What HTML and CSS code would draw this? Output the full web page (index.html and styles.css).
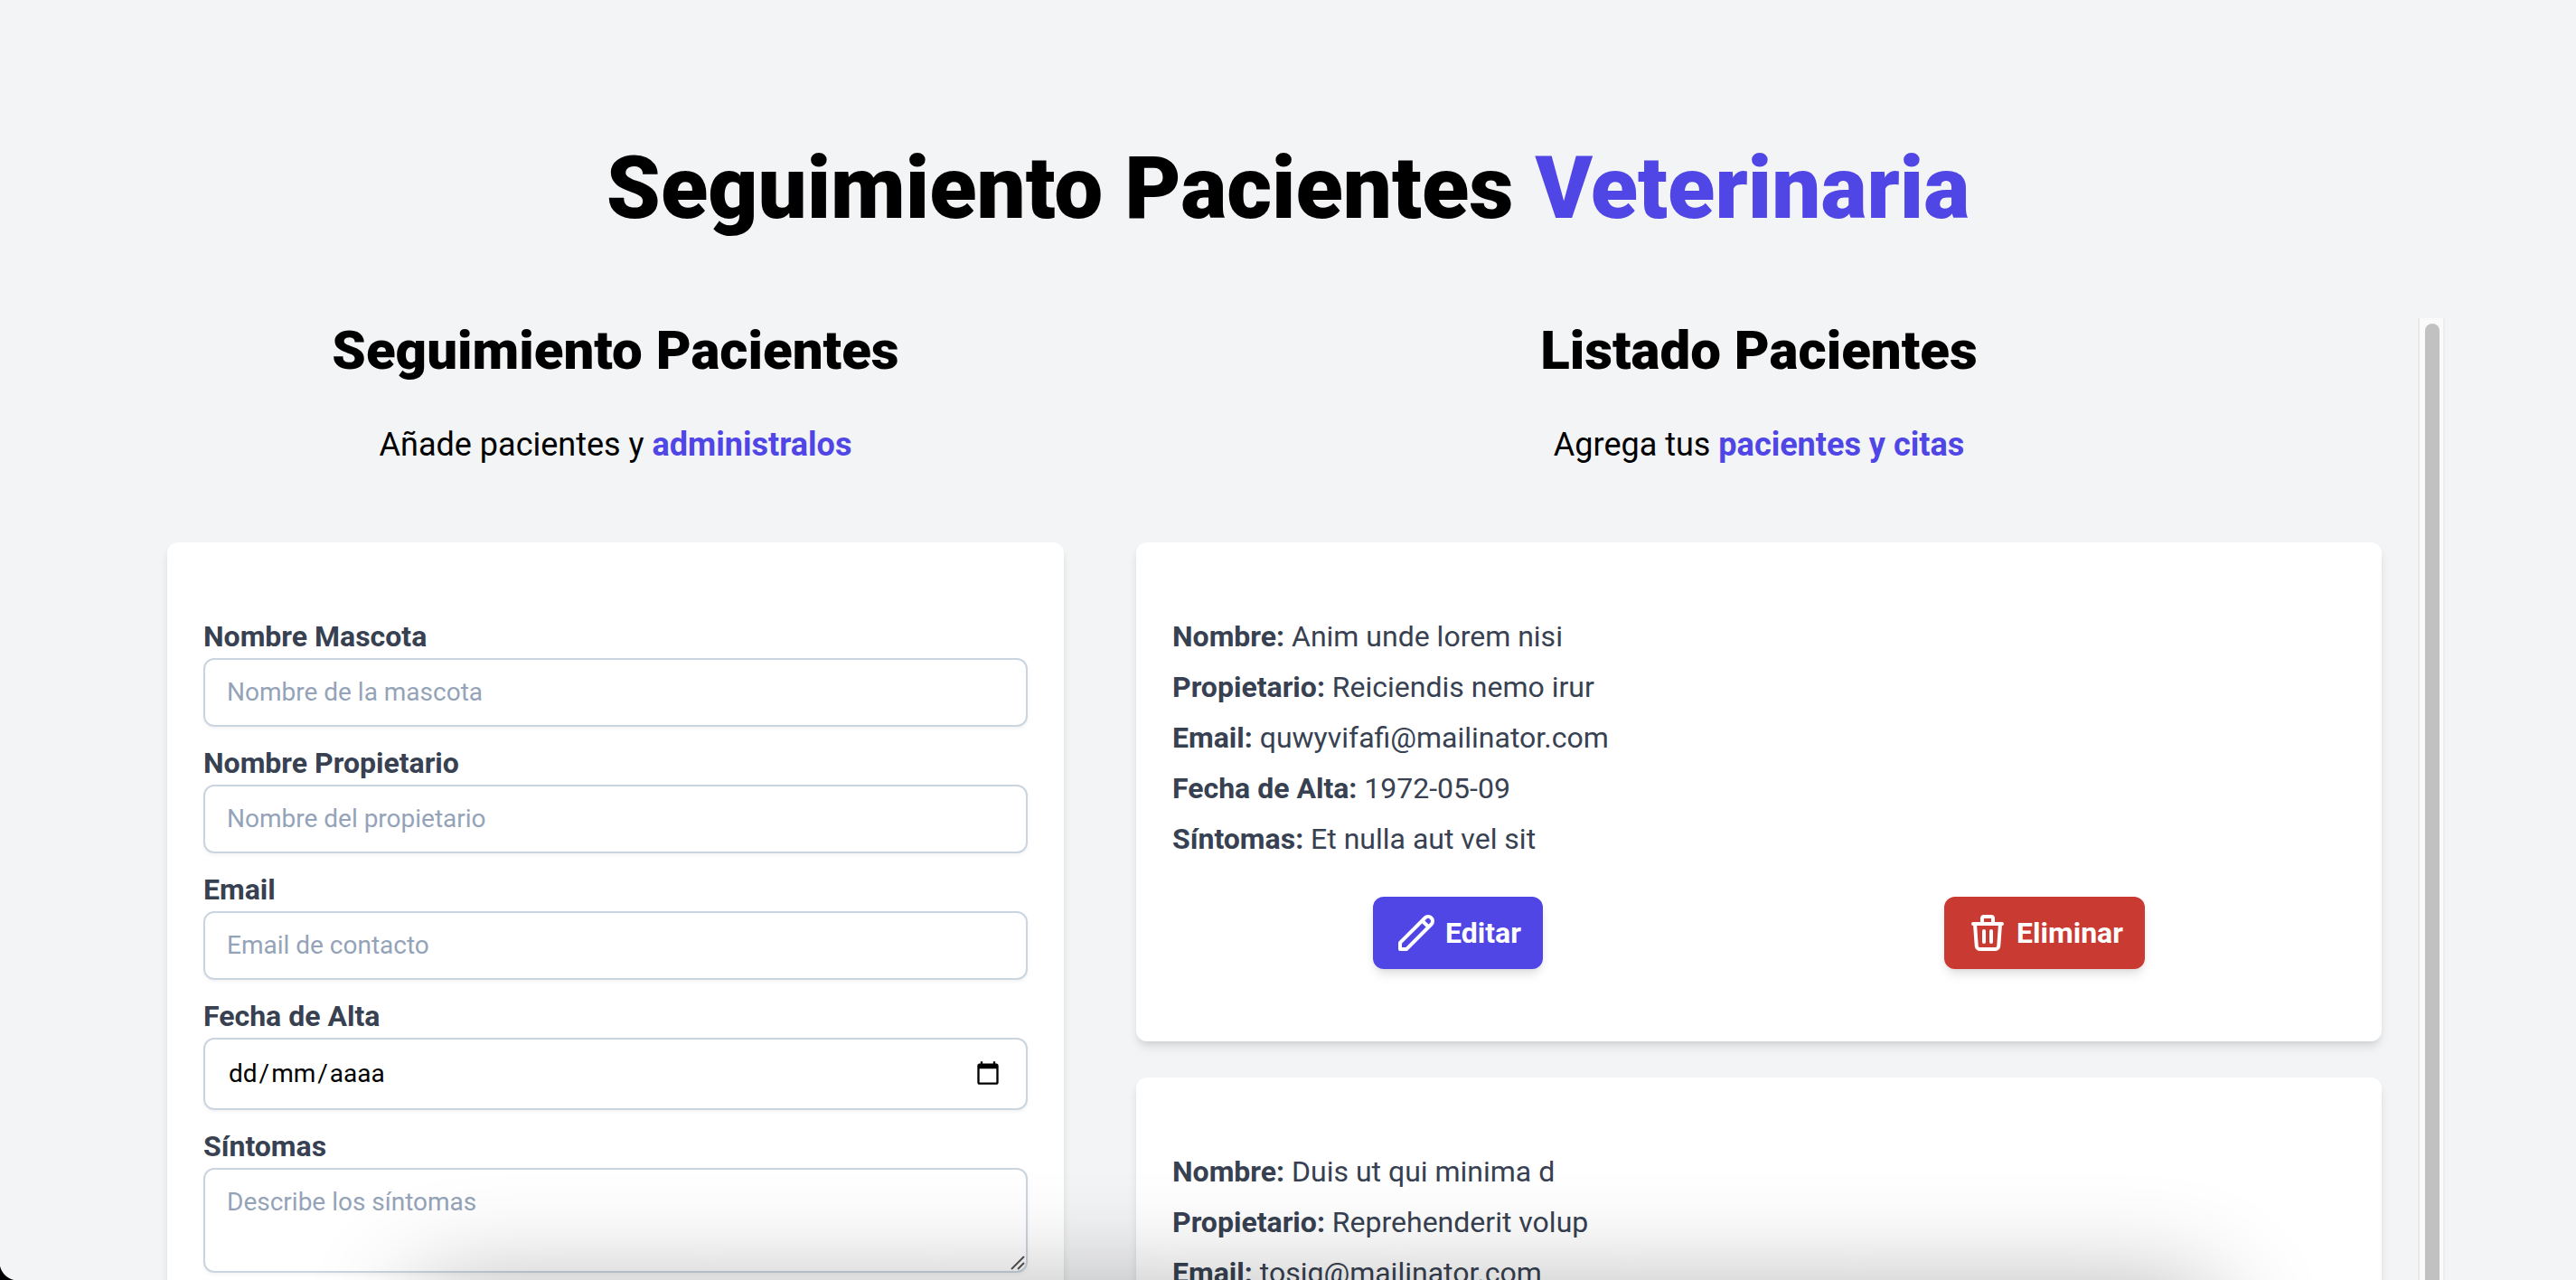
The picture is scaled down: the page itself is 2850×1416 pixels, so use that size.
FILE: index.html
```html
<!DOCTYPE html>
<html lang="es">
<head>
<meta charset="utf-8">
<meta name="viewport" content="width=device-width, initial-scale=1">
<title>Seguimiento Pacientes Veterinaria</title>
<link rel="stylesheet" href="styles.css">
</head>
<body>
<svg class="sprite" aria-hidden="true">
  <symbol id="icon-pencil" viewBox="0 0 24 24"><path d="M15.232 5.232l3.536 3.536m-2.036-5.036a2.5 2.5 0 113.536 3.536L6.5 21.036H3v-3.572L16.732 3.732z"/></symbol>
  <symbol id="icon-trash" viewBox="0 0 24 24"><path d="M19 7l-.867 12.142A2 2 0 0116.138 21H7.862a2 2 0 01-1.995-1.858L5 7m5 4v6m4-6v6m1-10V4a1 1 0 00-1-1h-4a1 1 0 00-1 1v3M4 7h16"/></symbol>
</svg>
<div class="container">
  <h1 class="title">Seguimiento Pacientes <span class="accent">Veterinaria</span></h1>
  <main class="columns">
    <section class="form-column">
      <h2 class="heading">Seguimiento Pacientes</h2>
      <p class="lead">Añade pacientes y <span class="accent strong">administralos</span></p>
      <form class="card form">
        <div class="field">
          <label class="label" for="mascota">Nombre Mascota</label>
          <input class="control" id="mascota" type="text" placeholder="Nombre de la mascota">
        </div>
        <div class="field">
          <label class="label" for="propietario">Nombre Propietario</label>
          <input class="control" id="propietario" type="text" placeholder="Nombre del propietario">
        </div>
        <div class="field">
          <label class="label" for="email">Email</label>
          <input class="control" id="email" type="email" placeholder="Email de contacto">
        </div>
        <div class="field">
          <label class="label" for="alta">Fecha de Alta</label>
          <div class="control-wrap">
            <input class="control date" id="alta" type="date">
            <span class="date-format" aria-hidden="true"><span class="date-part">dd</span>/<span class="date-part">mm</span>/<span class="date-part">aaaa</span></span>
            <svg class="calendar" viewBox="0 0 24 24" aria-hidden="true"><path d="M20 3h-1V1h-2v2H7V1H5v2H4c-1.100 0-2 .9-2 2v16c0 1.100.9 2 2 2h16c1.100 0 2-.9 2-2V5c0-1.100-.9-2-2-2zm0 18H4V8h16v13z"/></svg>
          </div>
        </div>
        <div class="field">
          <label class="label" for="sintomas">Síntomas</label>
          <div class="control-wrap">
            <textarea class="control area" id="sintomas" rows="2" placeholder="Describe los síntomas"></textarea>
            <svg class="grip" viewBox="0 0 16 16" aria-hidden="true"><path d="M1 15L15 1M8 15l7-7"/></svg>
          </div>
        </div>
      </form>
    </section>
    <section class="list-column">
      <div class="list-scroll" tabindex="0">
        <h2 class="heading">Listado Pacientes</h2>
        <p class="lead">Agrega tus <span class="accent strong">pacientes y citas</span></p>
        <article class="card patient">
          <p class="row"><b>Nombre:</b> Anim unde lorem nisi</p>
          <p class="row"><b>Propietario:</b> Reiciendis nemo irur</p>
          <p class="row"><b>Email:</b> quwyvifafi@mailinator.com</p>
          <p class="row"><b>Fecha de Alta:</b> 1972-05-09</p>
          <p class="row"><b>Síntomas:</b> Et nulla aut vel sit</p>
          <div class="actions">
            <button class="button edit" type="button"><svg class="icon" aria-hidden="true"><use href="#icon-pencil"/></svg>Editar</button>
            <button class="button delete" type="button"><svg class="icon" aria-hidden="true"><use href="#icon-trash"/></svg>Eliminar</button>
          </div>
        </article>
        <article class="card patient">
          <p class="row"><b>Nombre:</b> Duis ut qui minima d</p>
          <p class="row"><b>Propietario:</b> Reprehenderit volup</p>
          <p class="row"><b>Email:</b> tosig@mailinator.com</p>
        </article>
      </div>
      <div class="track" aria-hidden="true"><div class="thumb"></div></div>
    </section>
  </main>
</div>
<div class="bottom-shade" aria-hidden="true"></div>
<div class="corner" aria-hidden="true"></div>
</body>
</html>
```

FILE: styles.css
```css
*, *::before, *::after { box-sizing: border-box; margin: 0; padding: 0; }

body {
  height: 100vh;
  overflow: hidden;
  background: #f3f4f6;
  color: #000;
  font: 32px/48px Roboto, sans-serif;
}

.sprite { position: absolute; width: 0; height: 0; }

.container { max-width: 2560px; margin: 0 auto; padding-top: 160px; }

.title { font-size: 96px; line-height: 96px; font-weight: 900; text-align: center; }
.accent { color: #4f46e5; }
.strong { font-weight: 700; }

.columns { display: flex; margin-top: 96px; }
.form-column { width: 40%; margin: 0 40px; }
.list-column { display: flex; width: 60%; height: 100vh; }
.list-scroll { flex: 1; overflow-y: auto; scrollbar-width: none; }

.track {
  flex: none;
  width: 30px;
  padding: 6px 4px 6px 6px;
  background: #fafafa;
  border-left: 2px solid #e8e8e8;
  border-right: 2px solid #ededed;
}
.thumb { width: 16px; height: 90%; border-radius: 8px; background: #c1c1c1; }

.heading { font-size: 60px; line-height: 72px; font-weight: 900; text-align: center; }
.lead { margin: 40px 0 80px; font-size: 36px; line-height: 56px; text-align: center; }

.card {
  padding: 80px 40px;
  background: #fff;
  border-radius: 12px;
  box-shadow: 0 8px 12px -2px rgba(0, 0, 0, .1), 0 4px 8px -4px rgba(0, 0, 0, .1);
  color: #374151;
}

.field { margin-bottom: 16px; }
.label { display: block; font-weight: 700; }

.control {
  display: block;
  width: 100%;
  padding: 16px 24px;
  border: 2px solid #cbd5e1;
  border-radius: 12px;
  background: #fff;
  box-shadow: 0 2px 4px rgba(0, 0, 0, .05);
  color: #000;
  font: 28px/40px Roboto, sans-serif;
}
.control::placeholder { color: #94a3b8; opacity: 1; }
.control-wrap { position: relative; }
.date { height: 80px; }
.date::-webkit-datetime-edit,
.date::-webkit-calendar-picker-indicator { opacity: 0; }
.date-format {
  position: absolute;
  left: 26px;
  top: 20px;
  color: #000;
  font-size: 28px;
  line-height: 40px;
  pointer-events: none;
}
.date-part { padding: 0 2px; }
.calendar { position: absolute; right: 30px; top: 25px; width: 28px; height: 28px; pointer-events: none; }
.area { resize: vertical; }
.area::-webkit-resizer { background: transparent; }
.grip {
  position: absolute;
  right: 3px;
  bottom: 3px;
  width: 16px;
  height: 16px;
  fill: none;
  stroke: #555;
  stroke-width: 2;
  pointer-events: none;
}

.patient { margin: 0 40px 40px; }
.row { margin-bottom: 8px; }
.actions { display: flex; justify-content: space-around; padding-top: 32px; }

.button {
  display: flex;
  align-items: center;
  gap: 8px;
  padding: 16px 24px;
  border: 0;
  border-radius: 12px;
  box-shadow: 0 8px 12px -2px rgba(0, 0, 0, .1), 0 4px 8px -4px rgba(0, 0, 0, .1);
  color: #fff;
  font: 700 32px/48px Roboto, sans-serif;
}
.edit { background: #4f46e5; }
.delete { background: #c93a32; }
.icon { width: 48px; height: 48px; fill: none; stroke: currentColor; stroke-width: 2; stroke-linecap: round; stroke-linejoin: round; }

.bottom-shade {
  position: fixed;
  left: 16%;
  right: 14%;
  top: 100%;
  height: 200px;
  border-radius: 40px;
  box-shadow: 0 8px 120px rgba(0, 0, 0, .3);
  pointer-events: none;
}
.corner {
  position: fixed;
  left: 0;
  bottom: 0;
  width: 20px;
  height: 20px;
  background: radial-gradient(circle at 100% 0, transparent 20px, #000 21px);
  pointer-events: none;
}
```
